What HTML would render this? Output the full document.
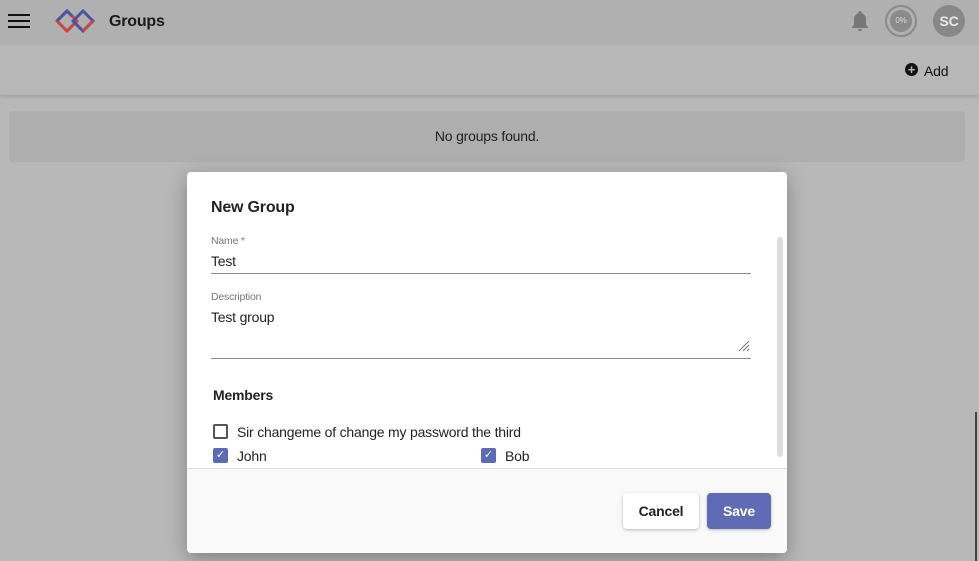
<!DOCTYPE html>
<html><head><style>
*{box-sizing:border-box;margin:0;padding:0}
body{width:979px;height:561px;overflow:hidden;background:#b8b8b8;font-family:"Liberation Sans",sans-serif;position:relative;color:#222;letter-spacing:-0.2px}
.top{position:absolute;left:0;top:0;width:979px;height:45px;background:#b0b0b0}
.bar2{position:absolute;left:0;top:45px;width:979px;height:50px;background:#b7b7b7;box-shadow:0 2px 3px rgba(0,0,0,.12)}
.card{position:absolute;left:9px;top:111px;width:956px;height:51px;background:#aeaeae;border-radius:4px;text-align:center;line-height:51px;font-size:14px;color:#1f1f1f}
.dlg{position:absolute;left:187px;top:172px;width:600px;height:381px;background:#fff;border-radius:4px;box-shadow:0 6px 20px rgba(0,0,0,.3);overflow:hidden}
.foot{position:absolute;left:0;top:296px;width:600px;height:85px;background:#f9f9f9;border-top:1px solid #ddd}
.lbl{position:absolute;font-size:10.5px;color:#777}
.val{position:absolute;font-size:14px;color:#222}
.line{position:absolute;left:24px;width:540px;height:1px;background:#888}
.cb{position:absolute;width:15px;height:15px;border-radius:2px;letter-spacing:0}
.btn{position:absolute;top:321px;height:36px;border-radius:4px;font-size:14px;font-weight:bold;text-align:center;line-height:36px;box-shadow:0 1px 3px rgba(0,0,0,.25)}
</style></head><body>
<div class="top">
 <div style="position:absolute;left:8px;top:14px;width:22px;height:2px;background:#111;box-shadow:0 6px 0 #111,0 12px 0 #111"></div>
 <svg style="position:absolute;left:55px;top:9px" width="40" height="24" viewBox="0 0 40 24"><path d="M2 12 L12 2 L22 12 L12 22 Z" fill="none" stroke="#c44" stroke-width="3"/><path d="M18 12 L28 2 L38 12 L28 22 Z" fill="none" stroke="#4a54a4" stroke-width="3"/><path d="M2 12 L12 2 L17 7" fill="none" stroke="#4a54a4" stroke-width="3"/><path d="M28 22 L38 12" fill="none" stroke="#c44" stroke-width="3"/></svg>
 <div style="position:absolute;left:109px;top:13px;font-size:16px;font-weight:bold;color:#1a1a1a">Groups</div>
 <svg style="position:absolute;left:849px;top:9px" width="22" height="24" viewBox="0 0 22 24"><path d="M11 2c-1 0-1.5.7-1.5 1.5v.6C6.5 5 5 7.5 5 10.5V16l-2 2v1h16v-1l-2-2v-5.5c0-3-1.5-5.5-4.5-6.4v-.6C12.5 2.7 12 2 11 2zM9 20a2 2 0 0 0 4 0z" fill="#777"/></svg>
 <div style="position:absolute;left:885px;top:5px;width:32px;height:32px;border-radius:50%;border:2px solid #8a8a8a;background:#b0b0b0"><div style="position:absolute;left:3px;top:3px;width:22px;height:22px;border-radius:50%;background:#8a8a8a;color:#ddd;font-size:8px;text-align:center;line-height:22px">0%</div></div>
 <div style="position:absolute;left:933px;top:5px;width:32px;height:32px;border-radius:50%;background:#888;color:#e8e8e8;font-size:14px;text-align:center;line-height:32px;font-weight:bold">SC</div>
</div>
<div class="bar2">
 <div style="position:absolute;left:905px;top:18px;width:13px;height:13px;border-radius:50%;background:#111;color:#b7b7b7;font-size:13px;line-height:13px;text-align:center;font-weight:bold;letter-spacing:0">+</div>
 <div style="position:absolute;left:924px;top:18px;font-size:14px;color:#111">Add</div>
</div>
<div class="card">No groups found.</div>
<div style="position:absolute;left:975px;top:412px;width:2px;height:149px;background:#444"></div>
<div class="dlg">
 <div style="position:absolute;left:24px;top:27px;font-size:16px;font-weight:bold;color:#222">New Group</div>
 <div style="position:absolute;left:590px;top:65px;width:6px;height:220px;background:#ddd;border-radius:3px"></div>
 <div class="lbl" style="left:24px;top:63px">Name *</div>
 <div class="val" style="left:24px;top:81px">Test</div>
 <div class="line" style="top:101px"></div>
 <div class="lbl" style="left:24px;top:119px">Description</div>
 <div class="val" style="left:24px;top:137px">Test group</div>
 <svg style="position:absolute;left:551px;top:168px" width="12" height="12"><path d="M11 1L1 11M11 5L5 11M11 9L9 11" stroke="#777"/></svg>
 <div class="line" style="top:186px"></div>
 <div style="position:absolute;left:26px;top:215px;font-size:14px;font-weight:bold;color:#222">Members</div>
 <div class="cb" style="left:26px;top:252px;border:2px solid #555"></div>
 <div class="val" style="left:50px;top:252px">Sir changeme of change my password the third</div>
 <div class="cb" style="left:26px;top:276px;background:#5c6bb8;color:#fff;font-size:11px;text-align:center;line-height:15px">✓</div>
 <div class="val" style="left:50px;top:276px">John</div>
 <div class="cb" style="left:294px;top:276px;background:#5c6bb8;color:#fff;font-size:11px;text-align:center;line-height:15px">✓</div>
 <div class="val" style="left:318px;top:276px">Bob</div>
 <div class="foot"></div>
 <div class="btn" style="left:436px;width:76px;background:#fff;color:#222">Cancel</div>
 <div class="btn" style="left:520px;width:64px;background:#5f6bb5;color:#fff">Save</div>
</div>
</body></html>
